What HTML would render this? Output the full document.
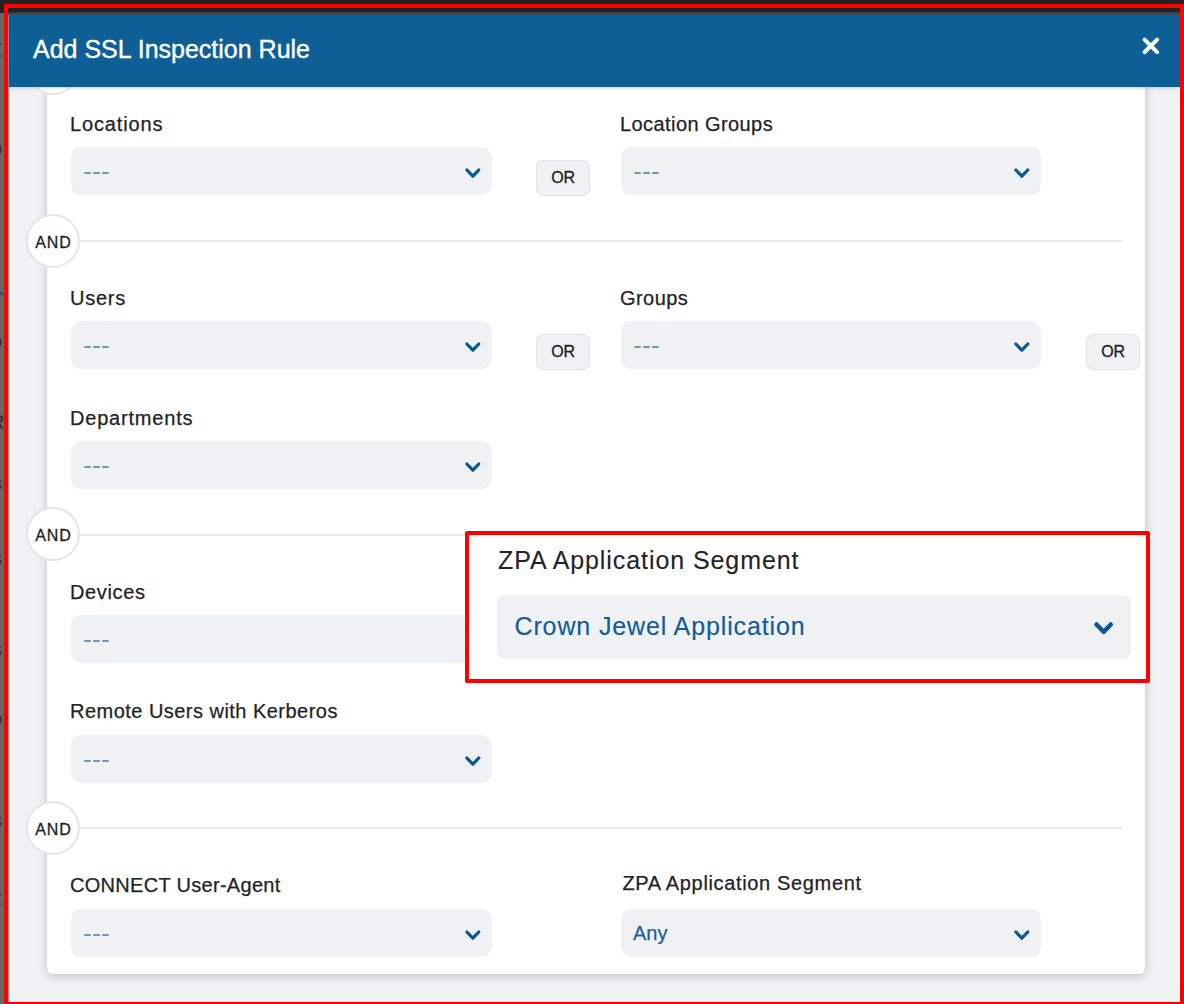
<!DOCTYPE html>
<html><head><meta charset="utf-8">
<style>
*{box-sizing:border-box;margin:0;padding:0}
html,body{width:1184px;height:1004px;overflow:hidden;background:#232222;font-family:"Liberation Sans",sans-serif;position:relative}
.abs{position:absolute}
#leftstrip{left:0;top:13px;width:4px;height:991px;background:#676767}
#modal{left:8px;top:12px;width:1172px;height:992px;background:linear-gradient(90deg,#8a9898 0,#8a9898 1px,#cacccf 1px,#cacccf 2px,#e6e8ea 2px,#e6e8ea 3px,#eff1f3 3px,#eff1f3 1171px,#effbfb 1171px)}
#lcol{left:3px;top:14px;width:1px;height:990px;background:#5a6b6b}
#mtop{left:8px;top:12px;width:1172px;height:3px;background:linear-gradient(#383a36,#3d5570)}
#hdr{left:9px;top:15px;width:1171px;height:72px;background:#0f5f97;box-shadow:0 1px 3px rgba(0,0,0,0.18)}
#title{left:33px;top:30.5px;color:#fff;-webkit-text-stroke:0.35px #fff;font-size:25px;line-height:36px;letter-spacing:0px;white-space:nowrap}
#close{left:1136px;top:30px;width:30px;height:30px}
#card{left:47px;top:40px;width:1098px;height:934px;background:#fff;border-radius:6px;box-shadow:0 2px 10px rgba(0,0,0,0.2)}
.lbl{position:absolute;color:#222326;-webkit-text-stroke:0.25px #222326;font-size:20px;line-height:24px;letter-spacing:0.4px;white-space:nowrap}
.fld{position:absolute;height:48px;background:#eff1f3;border-radius:10px}
.dash{position:absolute;left:13px;top:14px;color:#5c8abb;font-size:16px;line-height:20px;letter-spacing:1px}
.d3{position:absolute;left:13px;top:24.6px;width:30px;height:3px}
.d3 b{position:absolute;top:0;width:6.5px;height:2.5px;background:#7097bf;border-radius:1px}
.d3 b:nth-child(1){left:0}.d3 b:nth-child(2){left:9px}.d3 b:nth-child(3){left:18px}
.chev{position:absolute;right:8px;top:15px;width:22px;height:22px}
.or{position:absolute;width:54px;height:36px;background:#f0f1f3;border:1.5px solid #e0e2e5;border-radius:7px;color:#1f2024;-webkit-text-stroke:0.3px #1f2024;font-size:16px;line-height:34px;text-align:center;letter-spacing:-0.2px}
.sep{position:absolute;left:53px;width:1069px;height:2px;background:#e8eaec}
.and{position:absolute;left:26px;width:54px;height:54px;border-radius:50%;background:#fff;border:2px solid #e3e5e8;color:#1d1f22;-webkit-text-stroke:0.3px #1d1f22;font-size:16px;line-height:53px;text-align:center;letter-spacing:0.9px;text-indent:0.9px}
#redframe{left:4px;top:4px;width:1180px;height:1002px;border:4px solid #ff0000}
#hl{left:465px;top:531px;width:685px;height:152px;border:4px solid #ff0000;border-radius:2px;background:#fff}
</style></head><body>
<div id="leftstrip" class="abs"></div><div class="abs" style="left:0;top:0;width:3px;height:1004px;overflow:hidden;color:#2e2e2e;font-size:20px;line-height:24px"><span class="abs" style="left:-6px;top:36px;font-size:26px">t</span><span class="abs" style="left:-9px;top:136px;font-size:20px">p</span><span class="abs" style="left:-9px;top:174px;font-size:20px">c</span><span class="abs" style="left:-4px;top:248px;font-size:20px">l</span><span class="abs" style="left:-9px;top:329px;font-size:20px">o</span><span class="abs" style="left:-10px;top:410px;font-size:20px">R</span><span class="abs" style="left:-8px;top:471px;font-size:20px">s</span><span class="abs" style="left:-8px;top:546px;font-size:20px">s</span><span class="abs" style="left:-8px;top:637px;font-size:20px">s</span><span class="abs" style="left:-9px;top:706px;font-size:20px">o</span><span class="abs" style="left:-8px;top:808px;font-size:20px">s</span><span class="abs" style="left:-8px;top:886px;font-size:20px">z</span><div class="abs" style="left:0;top:292px;width:3px;height:3px;background:#2f4f6f"></div></div>
<div id="modal" class="abs"></div><div id="lcol" class="abs"></div>
<div id="mtop" class="abs"></div>
<div id="card" class="abs"></div>

<!-- row 1 -->
<div class="lbl" style="left:70px;top:112px;letter-spacing:0.85px">Locations</div>
<div class="fld" style="left:71px;top:147px;width:421px"><i class="d3"><b></b><b></b><b></b></i><svg class="chev" viewBox="0 0 22 22"><path d="M4.9 8L10.85 14.2L16.8 8" fill="none" stroke="#07589a" stroke-width="3.2" stroke-linecap="round" stroke-linejoin="round"/></svg></div>
<div class="or" style="left:536px;top:159.5px">OR</div>
<div class="lbl" style="left:620px;top:112px;letter-spacing:0.42px">Location Groups</div>
<div class="fld" style="left:621px;top:147px;width:420px"><i class="d3"><b></b><b></b><b></b></i><svg class="chev" viewBox="0 0 22 22"><path d="M4.9 8L10.85 14.2L16.8 8" fill="none" stroke="#07589a" stroke-width="3.2" stroke-linecap="round" stroke-linejoin="round"/></svg></div>

<div class="sep" style="top:240px"></div>
<div class="and" style="top:214px">AND</div>

<div class="lbl" style="left:70px;top:286px;letter-spacing:0.75px">Users</div>
<div class="fld" style="left:71px;top:321px;width:421px"><i class="d3"><b></b><b></b><b></b></i><svg class="chev" viewBox="0 0 22 22"><path d="M4.9 8L10.85 14.2L16.8 8" fill="none" stroke="#07589a" stroke-width="3.2" stroke-linecap="round" stroke-linejoin="round"/></svg></div>
<div class="or" style="left:536px;top:333.5px">OR</div>
<div class="lbl" style="left:620px;top:286px;letter-spacing:0.45px">Groups</div>
<div class="fld" style="left:621px;top:321px;width:420px"><i class="d3"><b></b><b></b><b></b></i><svg class="chev" viewBox="0 0 22 22"><path d="M4.9 8L10.85 14.2L16.8 8" fill="none" stroke="#07589a" stroke-width="3.2" stroke-linecap="round" stroke-linejoin="round"/></svg></div>
<div class="or" style="left:1086px;top:333.5px">OR</div>

<div class="lbl" style="left:70px;top:406px;letter-spacing:0.8px">Departments</div>
<div class="fld" style="left:71px;top:441px;width:421px"><i class="d3"><b></b><b></b><b></b></i><svg class="chev" viewBox="0 0 22 22"><path d="M4.9 8L10.85 14.2L16.8 8" fill="none" stroke="#07589a" stroke-width="3.2" stroke-linecap="round" stroke-linejoin="round"/></svg></div>

<div class="sep" style="top:533.5px"></div>
<div class="and" style="top:507px">AND</div>

<div class="lbl" style="left:70px;top:580px;letter-spacing:0.65px">Devices</div>
<div class="fld" style="left:71px;top:615px;width:421px"><i class="d3"><b></b><b></b><b></b></i><svg class="chev" viewBox="0 0 22 22"><path d="M4.9 8L10.85 14.2L16.8 8" fill="none" stroke="#07589a" stroke-width="3.2" stroke-linecap="round" stroke-linejoin="round"/></svg></div>

<div class="lbl" style="left:70px;top:699px;letter-spacing:0.47px">Remote Users with Kerberos</div>
<div class="fld" style="left:71px;top:735px;width:421px"><i class="d3"><b></b><b></b><b></b></i><svg class="chev" viewBox="0 0 22 22"><path d="M4.9 8L10.85 14.2L16.8 8" fill="none" stroke="#07589a" stroke-width="3.2" stroke-linecap="round" stroke-linejoin="round"/></svg></div>

<div class="sep" style="top:827px"></div>
<div class="and" style="top:801px">AND</div>

<div class="lbl" style="left:70px;top:873px;letter-spacing:0.3px">CONNECT User-Agent</div>
<div class="fld" style="left:71px;top:909px;width:421px"><i class="d3"><b></b><b></b><b></b></i><svg class="chev" viewBox="0 0 22 22"><path d="M4.9 8L10.85 14.2L16.8 8" fill="none" stroke="#07589a" stroke-width="3.2" stroke-linecap="round" stroke-linejoin="round"/></svg></div>
<div class="lbl" style="left:622.5px;top:871px;letter-spacing:0.65px">ZPA Application Segment</div>
<div class="fld" style="left:621px;top:909px;width:420px"><span class="dash" style="left:12px;letter-spacing:0px;font-size:20px;line-height:24px;top:12px;color:#1d5e9a;-webkit-text-stroke:0.25px #1d5e9a">Any</span><svg class="chev" viewBox="0 0 22 22"><path d="M4.9 8L10.85 14.2L16.8 8" fill="none" stroke="#07589a" stroke-width="3.2" stroke-linecap="round" stroke-linejoin="round"/></svg></div>

<!-- top partial circle -->
<div class="and" style="top:41px"></div>

<div id="hdr" class="abs"></div>
<div id="title" class="abs">Add SSL Inspection Rule</div>
<svg id="close" class="abs" viewBox="0 0 30 30"><path d="M8.6 9.6L21.1 22.1M21.1 9.6L8.6 22.1" stroke="#fff" stroke-width="4.1" stroke-linecap="round"/></svg>

<div id="hl" class="abs"></div>
<div class="lbl" style="left:498px;top:544.5px;font-size:25px;line-height:30px;letter-spacing:0.92px;-webkit-text-stroke:0.1px #222326">ZPA Application Segment</div>
<div class="fld" style="left:497px;top:595px;width:634px;height:64px;border-radius:8px"><span class="dash" style="left:17.5px;top:15px;font-size:25px;line-height:32px;letter-spacing:0.87px;color:#115c9c;-webkit-text-stroke:0.15px #115c9c">Crown Jewel Application</span><svg class="abs" style="right:8px;top:20px;width:30px;height:30px" viewBox="0 0 30 30"><path d="M3.5 9.5L10.6 16.8L17.8 9.5" fill="none" stroke="#07589a" stroke-width="4.5" stroke-linecap="round" stroke-linejoin="round"/></svg></div>

<div id="redframe" class="abs"></div>
</body></html>
